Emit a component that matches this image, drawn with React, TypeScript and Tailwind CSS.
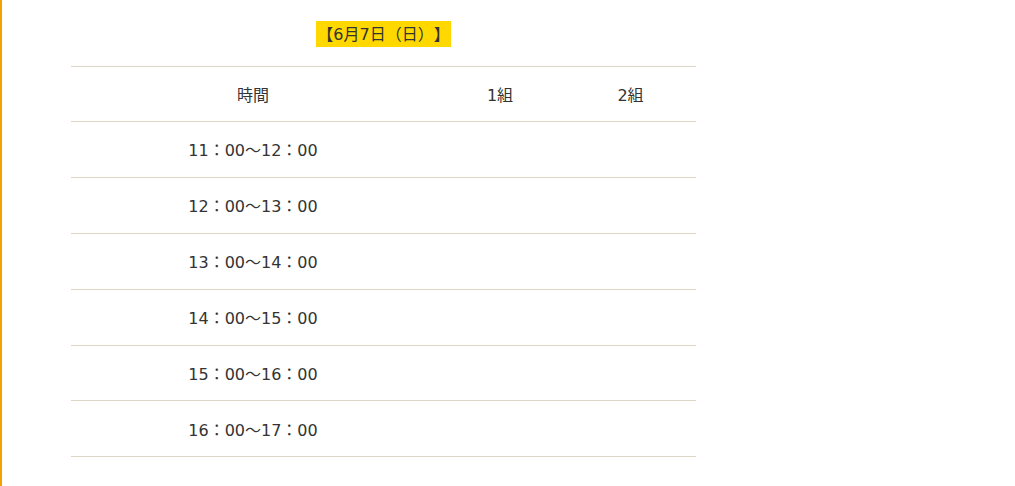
const slots = [
  "11：00〜12：00",
  "12：00〜13：00",
  "13：00〜14：00",
  "14：00〜15：00",
  "15：00〜16：00",
  "16：00〜17：00",
];

export default function App() {
  return (
    <div
      className="min-h-[486px] w-[1015px] border-l-2 border-[#f5a000] bg-white text-[16px] text-[#333] [text-spacing-trim:space-all]"
      style={{ fontFamily: '"DejaVu Sans", "Noto Sans CJK JP", sans-serif' }}
    >
      <div className="ml-[69px] w-[625px] pt-[21px]">
        <div className="mb-[19px] flex justify-center">
          <span className="inline-block h-[26px] bg-[#ffd800] px-[1px] pt-[1px] leading-[26px]">【6月7日（日）】</span>
        </div>
        <table className="w-full border-collapse border-t border-[#ddd5c8]">
          <thead>
            <tr className="border-b border-[#ddd5c8]">
              <th className="h-[55px] w-[364px] pt-[4px] text-center font-normal">時間</th>
              <th className="h-[55px] w-[130px] pt-[4px] text-center font-normal">1組</th>
              <th className="h-[55px] pt-[4px] text-center font-normal">2組</th>
            </tr>
          </thead>
          <tbody>
            {slots.map((s) => (
              <tr key={s} className="border-b border-[#ddd5c8]">
                <td className="h-[55.9px] pt-[4px] text-center">{s}</td>
                <td></td>
                <td></td>
              </tr>
            ))}
          </tbody>
        </table>
      </div>
    </div>
  );
}
